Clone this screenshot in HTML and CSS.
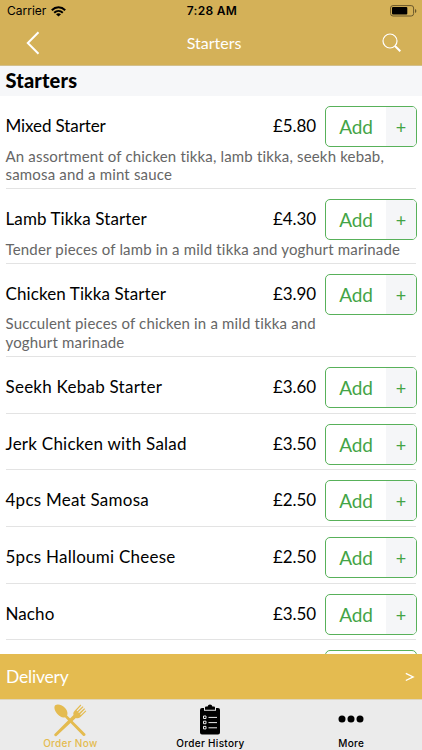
FILE: index.html
```html
<!DOCTYPE html>
<html lang="en">
<head>
<meta charset="utf-8">
<title>Starters</title>
<link rel="stylesheet" href="styles.css">
</head>
<body>
<div class="app">
  <header class="header">
    <div class="status">
      <div class="carrier"><span>Carrier</span>
        <svg width="15" height="11" viewBox="0 0 15 11"><g fill="none" stroke="#000" stroke-width="2"><path d="M.8 4.2C4.6.4 10.4.4 14.2 4.2"/><path d="M3.2 6.8C5.7 4.5 9.3 4.5 11.8 6.8"/></g><path d="M7.5 10.6 5 8.2Q7.5 6.5 10 8.2Z"/></svg>
      </div>
      <span class="time">7:28 AM</span>
      <svg class="battery" width="27" height="12" viewBox="0 0 27 12"><rect x=".6" y=".6" width="23" height="10.4" rx="2.4" fill="none" stroke="#69572b"/><rect x="2" y="2" width="15.3" height="7.6" rx="1"/><path d="M25 4v4q1.4-.5 1.4-2T25 4" fill="#69572b"/></svg>
    </div>
    <div class="navbar">
      <svg class="back" width="14" height="24" viewBox="0 0 14 24"><path d="M12.5 1.3 1.8 12l10.7 10.7" fill="none" stroke="#fff" stroke-width="2"/></svg>
      <h1 class="title">Starters</h1>
      <svg class="search" width="20" height="20" viewBox="0 0 20 20"><g fill="none" stroke="#fff"><circle cx="8" cy="8" r="7" stroke-width="1.2"/><path d="m13 13 5.3 5.2" stroke-width="2"/></g></svg>
    </div>
  </header>
  <h2 class="section">Starters</h2>
  <main class="list">
    <article class="item"><div class="line"><h3 class="name tight">Mixed Starter</h3><span class="price">£5.80</span><button class="add"><span class="label">Add</span><span class="plus">+</span></button></div><p class="desc">An assortment of chicken tikka, lamb tikka, seekh kebab,<br>samosa and a mint sauce</p></article>
    <article class="item"><div class="line"><h3 class="name">Lamb Tikka Starter</h3><span class="price">£4.30</span><button class="add"><span class="label">Add</span><span class="plus">+</span></button></div><p class="desc">Tender pieces of lamb in a mild tikka and yoghurt marinade</p></article>
    <article class="item"><div class="line"><h3 class="name">Chicken Tikka Starter</h3><span class="price">£3.90</span><button class="add"><span class="label">Add</span><span class="plus">+</span></button></div><p class="desc">Succulent pieces of chicken in a mild tikka and<br>yoghurt marinade</p></article>
    <article class="item"><div class="line"><h3 class="name wide">Seekh Kebab Starter</h3><span class="price">£3.60</span><button class="add"><span class="label">Add</span><span class="plus">+</span></button></div></article>
    <article class="item"><div class="line"><h3 class="name wide">Jerk Chicken with Salad</h3><span class="price">£3.50</span><button class="add"><span class="label">Add</span><span class="plus">+</span></button></div></article>
    <article class="item"><div class="line"><h3 class="name wide">4pcs Meat Samosa</h3><span class="price">£2.50</span><button class="add"><span class="label">Add</span><span class="plus">+</span></button></div></article>
    <article class="item"><div class="line"><h3 class="name wide">5pcs Halloumi Cheese</h3><span class="price">£2.50</span><button class="add"><span class="label">Add</span><span class="plus">+</span></button></div></article>
    <article class="item"><div class="line"><h3 class="name">Nacho</h3><span class="price">£3.50</span><button class="add"><span class="label">Add</span><span class="plus">+</span></button></div></article>
    <article class="item"><div class="line"><button class="add"></button></div></article>
  </main>
  <div class="delivery"><span class="mode">Delivery</span><svg width="10" height="10" viewBox="0 0 10 10"><path d="m.8 1.3 7.4 3.6L.8 8.5" fill="none" stroke="#fff" stroke-width="1.3"/></svg></div>
  <nav class="tabs">
    <div class="tab active">
      <svg width="34" height="34" viewBox="0 0 34 34" fill="#e4bb50"><path d="M2.2 2.3C4.6.5 9.6 2 12.5 5.4c2 2.5 2.4 5 1.6 7L32.5 31q.4 1.5-1.2 2-.8.2-1.5-.5L12 14.2c-2.4.8-5.2-.5-7.4-3C1.7 8.2.5 4.2 2.2 2.3Z"/><path d="M1.3 31.2 20.5 12c-.6-2 .1-3.3 1.4-4.6L27.5 1.6l.8.8-4.7 5.2.7.7 5.4-5 .8.8-5.2 5.2.7.7 5.3-4.8.8.8-5 5.3.7.7 4.7-4.6.8.8-5.8 5.8c-1.4 1.3-3 1.7-4.7 1.1L3.5 33q-.7.5-1.5 0-1.2-.8-.7-1.8Z"/></svg>
      <span>Order Now</span>
    </div>
    <div class="tab history">
      <svg width="22" height="32" viewBox="0 0 22 32"><path d="M3 4h2v2.8h12V4h2q2 0 2 2v22.5q0 2-2 2H3q-2 0-2-2V6q0-2 2-2Z"/><path d="M6 5.8V3.6q0-1 1-1h1.6Q9 .6 11 .6t2.4 2H15q1 0 1 1v2.2Z"/><g fill="none" stroke="#ebebeb" stroke-width="1"><path d="M4.5 12h2.5v2.5H4.5zM4.5 17.2h2.5v2.5H4.5zM4.5 22.4h2.5v2.5H4.5zM9.5 13.4H18M9.5 18.6H18M9.5 23.8H18"/></g></svg>
      <span>Order History</span>
    </div>
    <div class="tab more">
      <svg width="26" height="8" viewBox="0 0 26 8"><circle cx="4" cy="4" r="3.5"/><circle cx="13" cy="4" r="3.5"/><circle cx="22" cy="4" r="3.5"/></svg>
      <span>More</span>
    </div>
  </nav>
</div>
</body>
</html>
```
FILE: styles.css
```css
* { box-sizing: border-box; margin: 0; padding: 0; }
body { font-family: Lato, sans-serif; background: #fff; overflow: hidden; }
svg { display: block; flex: none; }
.app { width: 422px; height: 750px; display: flex; flex-direction: column; overflow: hidden; }
.header { height: 66px; flex: none; background: #d4b158; border-bottom: 1px solid #d3c08d; }
.status { height: 22px; display: grid; grid-template-columns: 1fr auto 1fr; align-items: center; padding: 0 5px 0 7px; font: 12px/20px Inter, sans-serif; }
.carrier { display: flex; align-items: center; gap: 5px; letter-spacing: 0; }
.time { font-weight: 600; letter-spacing: .3px; }
.battery { justify-self: end; }
.navbar { height: 43px; display: grid; grid-template-columns: 1fr auto 1fr; align-items: center; padding: 0 20px 0 26px; }
.title { font-size: 16px; line-height: 20px; padding-bottom: 2px; font-weight: 400; color: #fff; letter-spacing: 0; }
.back { margin-top: -1px; }
.search { justify-self: end; margin-top: -2px; }
.section { height: 30px; flex: none; background: #f6f7f9; padding-left: 5.5px; font-size: 20px; line-height: 29px; font-weight: 900; letter-spacing: .15px; }
.list { flex: 1; min-height: 0; overflow: hidden; padding: 0 6px; }
.item { padding: 10px 0 4.7px; border-bottom: 1px solid #e3e3e3; }
.line { height: 41px; display: flex; align-items: center; }
.name { flex: 1; font-size: 17px; line-height: 20px; font-weight: 400; letter-spacing: .1px; margin: 0 0 1px -.5px; }
.tight { letter-spacing: -.1px; }
.wide { letter-spacing: .25px; }
.price { font-size: 17px; line-height: 20px; margin: 0 9px 1px 0; letter-spacing: -.1px; }
.add { width: 92px; height: 41px; margin: 0 -1px 0 auto; display: flex; align-items: stretch; border: 1px solid #58b15a; border-radius: 5px; background: #fff; overflow: hidden; font: 19px/39px Lato, sans-serif; color: #43a446; }
.label { flex: 1; letter-spacing: -.2px; }
.plus { width: 30px; background: #f5f6f8; font-size: 18px; line-height: 41px; }
.desc { font-size: 15px; line-height: 18.15px; color: #666; letter-spacing: .17px; margin: -.5px 0 .5px -.5px; white-space: nowrap; }
.delivery { height: 45px; flex: none; background: #e4bb50; color: #fff; display: flex; align-items: center; justify-content: space-between; padding: 0 7px 0 6px; font-size: 17.5px; }
.mode { letter-spacing: -.2px; padding-bottom: 1px; }
.tabs { height: 51px; flex: none; display: grid; grid-template-columns: repeat(3, 1fr); background: #ebebeb; border-top: 1px solid #dfd6bd; font: 500 10px/12px Inter, sans-serif; letter-spacing: .3px; }
.tab { display: flex; flex-direction: column; align-items: center; justify-content: space-between; padding: 3px 0 2px; }
.active { color: #e4bb50; }
.history { padding-top: 4px; padding-right: 1px; }
.more { padding-top: 15px; padding-right: 1px; }
```
